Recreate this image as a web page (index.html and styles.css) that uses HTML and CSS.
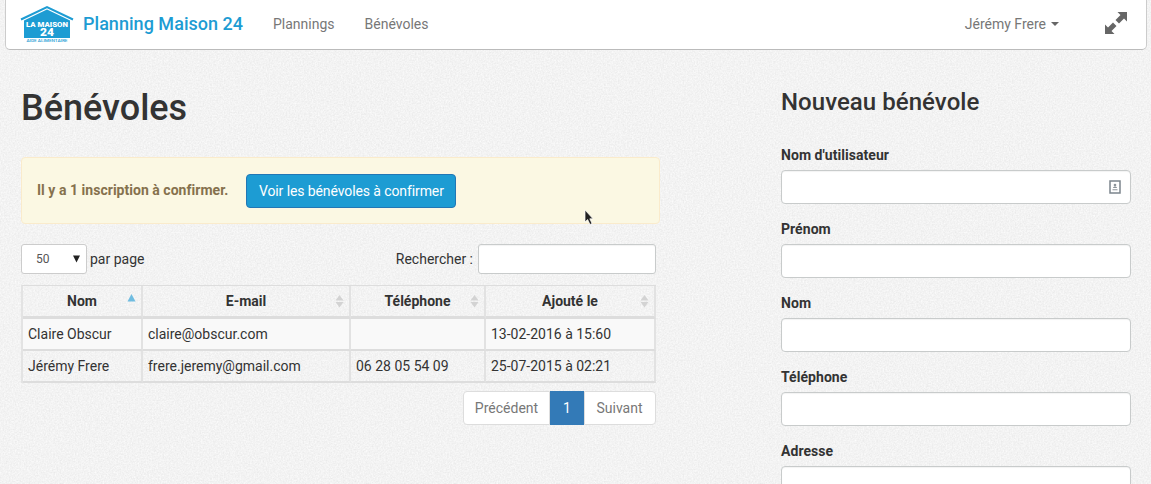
FILE: index.html
```html
<!DOCTYPE html>
<html lang="fr">
<head>
<meta charset="utf-8">
<title>Planning Maison 24</title>
<link rel="stylesheet" href="styles.css">
</head>
<body>
<svg class="paper" aria-hidden="true"><filter id="grain" x="0" y="0" width="100%" height="100%" color-interpolation-filters="sRGB"><feTurbulence type="fractalNoise" baseFrequency="0.65" numOctaves="3" seed="4"/><feColorMatrix values="0.09 0 0 0 0.907  0.09 0 0 0 0.907  0.09 0 0 0 0.907  0 0 0 0 1"/></filter><rect width="100%" height="100%" filter="url(#grain)"/></svg>
<header class="navbar">
  <svg class="logo" viewBox="0 0 54 38" width="54" height="38">
    <path d="M1 14.500 27 2 53 14.500" fill="none" stroke="#1d9cd3" stroke-width="2"/>
    <path d="M4 15.500 27 4.500 50 15.500V33H4z" fill="#1d9cd3"/>
    <text class="logo-name" x="27" y="21.500" textLength="42" lengthAdjust="spacingAndGlyphs">LA MAISON</text>
    <text class="logo-number" x="27" y="31" textLength="14" lengthAdjust="spacingAndGlyphs">24</text>
    <text class="logo-tagline" x="27" y="37.300" textLength="41" lengthAdjust="spacingAndGlyphs">AIDE ALIMENTAIRE</text>
  </svg>
  <a class="brand">Planning Maison 24</a>
  <nav class="menu"><a>Plannings</a><a>Bénévoles</a></nav>
  <a class="user">Jérémy Frere<span class="caret"></span></a>
  <svg class="expand" viewBox="0 0 22 22" width="22" height="22"><path fill="#666" d="M12.500 0H22v9.500l-3-3-5 5L10.500 8l5-5zM0 12.500l3 3 5-5L11.500 14l-5 5 3 3H0z"/><path stroke="#fff" stroke-width="1.600" d="M6 6l10 10"/></svg>
</header>
<main class="content">
  <section class="list">
    <h1>Bénévoles</h1>
    <div class="alert"><strong>Il y a 1 inscription à confirmer.</strong><button class="btn">Voir les bénévoles à confirmer</button></div>
    <div class="tools">
      <div class="length"><span class="select">50<svg width="7" height="8"><path d="M0 .5h7L3.500 7.500z" fill="#222"/></svg></span>par page</div>
      <label class="search">Rechercher :<input class="field"></label>
    </div>
    <table class="table">
      <colgroup><col class="c-name"><col class="c-mail"><col class="c-phone"><col class="c-date"></colgroup>
      <thead><tr>
        <th><span class="head">Nom<svg class="sort" width="9" height="14"><path d="M.5 7.500 4.500 0 8.500 7.500z" fill="#6fbce0"/></svg></span></th>
        <th><span class="head">E-mail<svg class="sort" width="9" height="14"><path d="M.5 6.500 4.500 1 8.500 6.500zM.5 8h8l-4 5.500z" fill="#d3d3d3"/></svg></span></th>
        <th><span class="head">Téléphone<svg class="sort" width="9" height="14"><path d="M.5 6.500 4.500 1 8.500 6.500zM.5 8h8l-4 5.500z" fill="#d3d3d3"/></svg></span></th>
        <th><span class="head">Ajouté le<svg class="sort" width="9" height="14"><path d="M.5 6.500 4.500 1 8.500 6.500zM.5 8h8l-4 5.500z" fill="#d3d3d3"/></svg></span></th>
      </tr></thead>
      <tbody>
        <tr><td>Claire Obscur</td><td>claire@obscur.com</td><td></td><td>13-02-2016 à 15:60</td></tr>
        <tr><td>Jérémy Frere</td><td>frere.jeremy@gmail.com</td><td>06 28 05 54 09</td><td>25-07-2015 à 02:21</td></tr>
      </tbody>
    </table>
    <div class="pages"><a>Précédent</a><a class="active">1</a><a>Suivant</a></div>
  </section>
  <form class="form">
    <h2>Nouveau bénévole</h2>
    <label>Nom d'utilisateur<span class="field"><svg width="12" height="14" viewBox="0 0 12 14"><path d="M1 1h10v12H1z" fill="#fff" stroke="#7c858d" stroke-width="1.500"/><circle cx="6" cy="5" r="1.300" fill="#8c9399"/><path d="M4 8c0-2 4-2 4 0zM3.500 9.200h5v1h-5z" fill="#8c9399"/></svg></span></label>
    <label>Prénom<span class="field"></span></label>
    <label>Nom<span class="field"></span></label>
    <label>Téléphone<span class="field"></span></label>
    <label>Adresse<span class="field"></span></label>
  </form>
</main>
<svg class="pointer" width="10" height="17" viewBox="0 0 10 17"><path d="M1 1v12l2.600-2.500L6 15.500l2-1-2.200-4.700H9z" fill="#222" stroke="#fff" stroke-width=".7"/></svg>
</body>
</html>
```
FILE: styles.css
```css
* { box-sizing: border-box; }
html, body { height: 100%; overflow: hidden; }
body { margin: 0; background: #f2f2f2; color: #333; font: 14px/20px Roboto, sans-serif; }
.paper { position: absolute; inset: 0; width: 100%; height: 100%; z-index: -1; }
.navbar { display: flex; align-items: center; width: 1142px; height: 50px; margin-left: 5px; padding: 0 20px 1px 14px; background: #fff; border: 1px solid #ccc; border-top: 0; border-bottom-color: #bbb; border-radius: 0 0 5px 5px; color: #777; }
.logo text { text-anchor: middle; font-family: Roboto, sans-serif; }
.logo-name { fill: #fff; font-size: 7px; font-weight: 900; }
.logo-number { fill: #fff; font-size: 10px; font-weight: 900; }
.logo-tagline { fill: #1d9cd3; font-size: 4px; font-weight: 500; }
.brand { width: 190px; margin-left: 9px; color: #1d9cd3; font-size: 18px; font-weight: 500; letter-spacing: .03px; white-space: nowrap; }
.menu { display: flex; gap: 30px; }
.user { display: flex; align-items: center; gap: 5px; margin-left: auto; margin-right: 45px; }
.caret { border: 4px solid transparent; border-top-color: #666; border-bottom: 0; }
.expand { margin: -2px -1px 0 1px; }
.content { display: flex; justify-content: space-between; height: 434px; padding: 0 20px 0 21px; }
.list { width: 639px; }
h1 { margin: 38px 0 29px; font-size: 36px; line-height: 40px; font-weight: 500; }
.alert { display: flex; align-items: center; gap: 18px; height: 67px; margin-bottom: 20px; padding: 0 15px; background: #fbf8e3; border: 1px solid #faebcc; border-radius: 4px; color: #8a6d3b; }
.alert strong { margin-top: -1px; color: #85714d; letter-spacing: .03px; }
.btn { height: 34px; width: 210px; padding: 0; border: 1px solid #2277b5; border-radius: 4px; background: #1d9cd3; color: #fff; font: 14px/20px Roboto, sans-serif; letter-spacing: -.1px; }
.tools { display: flex; justify-content: space-between; width: 635px; height: 30px; margin-bottom: 11px; }
.length, .search { display: flex; align-items: center; line-height: 18px; padding-bottom: 0; }
.length { gap: 3px; }
.search { gap: 5px; }
.select { display: flex; align-items: center; justify-content: space-between; width: 66px; height: 30px; padding: 0 6px 0 14px; background: #fff; border: 1px solid #ccc; border-radius: 3px; color: #555; font-size: 12px; }
.field { display: flex; align-items: center; justify-content: flex-end; background: #fff; border: 1px solid #c8cbcb; border-radius: 4px; box-shadow: inset 0 1px 1px rgba(0,0,0,.05); }
.search .field { width: 178px; height: 30px; border-radius: 3px; }
.table { width: 635px; table-layout: fixed; border-spacing: 0; border-left: 2px solid #e3e3e3; border-top: 1px solid #ddd; }
.c-name { width: 120px; }
.c-mail { width: 208px; }
.c-phone { width: 135px; }
th, td { height: 32px; padding: 0 5px; border-right: 2px solid #e2e2e2; border-bottom: 2px solid #ddd; text-align: left; white-space: nowrap; }
th { height: 33px; border-bottom-width: 3px; }
.head { display: flex; position: relative; justify-content: center; }
.sort { position: absolute; right: 0; top: 3px; }
tbody tr:first-child { background: #f9f9f9; }
.pages { display: flex; width: 193px; height: 34px; margin: 8px 0 0 442px; color: #777; }
.pages a { display: flex; align-items: center; justify-content: center; width: 72px; padding-right: 1px; background: #fff; border: 1px solid #ddd; border-radius: 0 4px 4px 0; }
.pages a:first-child { width: 87px; padding-right: 0; border-radius: 4px 0 0 4px; }
.pages a.active { width: 34px; padding-right: 0; background: #337ab7; border-color: #337ab7; border-radius: 0; color: #fff; }
.form { width: 350px; }
h2 { margin: 39px 0 30px; font-size: 24px; line-height: 26px; font-weight: 500; letter-spacing: .05px; }
.form label { display: block; height: 59px; margin-bottom: 15px; font-weight: 700; letter-spacing: .05px; }
.form .field { height: 34px; margin-top: 5px; padding-right: 9px; }
.pointer { position: absolute; left: 584px; top: 209px; }
```
